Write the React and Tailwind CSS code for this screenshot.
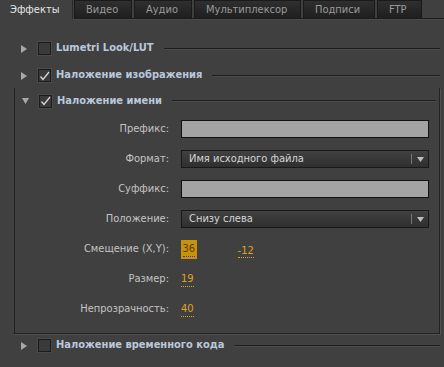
const font = { fontFamily: '"DejaVu Sans Condensed", "DejaVu Sans", Verdana, sans-serif' }

const tabs = [
  { label: 'Видео', w: 'w-[58px]' },
  { label: 'Аудио', w: 'w-[58px]' },
  { label: 'Мультиплексор', w: 'w-[107px]' },
  { label: 'Подписи', w: 'w-[72px]' },
  { label: 'FTP', w: 'w-[45px]' },
]

function Triangle({ open }) {
  return open ? (
    <svg width="7" height="6" viewBox="0 0 7 6" className="shrink-0">
      <path d="M0 0H7L3.5 6Z" fill="#a8a8a8" />
    </svg>
  ) : (
    <svg width="6" height="8" viewBox="0 0 6 8" className="shrink-0">
      <path d="M0 0L6 4L0 8Z" fill="#a8a8a8" />
    </svg>
  )
}

function Check({ on }) {
  return (
    <div className="w-[13px] h-[13px] shrink-0 border border-[#1c1c1c] bg-[#3a3a3a] shadow-[0_0_0_1px_#4a4a4a] flex items-center justify-center">
      {on && (
        <svg width="11" height="10" viewBox="0 0 11 10">
          <path d="M1.5 5.5L4 8.5L10 1" fill="none" stroke="#d8d8d8" strokeWidth="1.3" />
        </svg>
      )}
    </div>
  )
}

function Header({ title, open, on, h = 'h-[27px]' }) {
  return (
    <div className={`flex items-center ${h} pl-[21px] pr-[4px]`}>
      <div className="w-[17px] flex"><Triangle open={open} /></div>
      <Check on={on} />
      <span className="ml-[5px] text-[11px] font-bold text-[#bac8dc] whitespace-nowrap">{title}</span>
      <div className="flex-1 ml-[10px] h-[2px] border-t border-[#1e1e1e] border-b border-b-[#4c4c4c]" />
    </div>
  )
}

function Row({ label, children }) {
  return (
    <div className="flex items-center h-[30px]">
      <div className="w-[155px] text-right text-[11px] text-[#c4c4c4] whitespace-nowrap">{label}</div>
      <div className="flex-1 ml-[12px] mr-[10px] flex items-center">{children}</div>
    </div>
  )
}

function Input() {
  return <div className="w-full h-[18px] bg-[#a3a3a3] border border-[#111]" />
}

function Select({ value }) {
  return (
    <div className="w-full h-[18px] border border-[#191919] bg-gradient-to-b from-[#414141] to-[#2f2f2f] flex items-center text-[11px] text-[#d6d6d6]">
      <span className="flex-1 pl-[7px]">{value}</span>
      <div className="w-px h-[10px] bg-[#777]" />
      <div className="w-[16px] flex justify-center">
        <svg width="7" height="5" viewBox="0 0 7 5"><path d="M0 0H7L3.5 5Z" fill="#bdbdbd" /></svg>
      </div>
    </div>
  )
}

function Val({ children, hl }) {
  return hl ? (
    <span className="inline-flex items-end h-[19px] px-[1.5px] bg-[#c8920a]">
      <span className="text-[11px] leading-[14px] text-[#5a3f06] border-b border-dotted border-[#5a3f06] mb-[2px]">{children}</span>
    </span>
  ) : (
    <span className="text-[11px] leading-[14px] border-b border-dotted text-[#e0a21e] border-[#e0a21e]">
      {children}
    </span>
  )
}

export default function App() {
  return (
    <div className="w-[444px] h-[367px] bg-[#404040] overflow-hidden" style={font}>
      <div className="flex h-[19px]">
        <div className="w-[73px] h-[19px] pl-[10px] text-[11px] leading-[19px] text-[#e6e6e6] border-r border-[#2a2a2a]">Эффекты</div>
        <div className="flex gap-[2px] ml-[1px] flex-1 border-b border-[#1c1c1c] shadow-[0_1px_0_#4a4a4a]">
          {tabs.map(t => (
            <div key={t.label} className={`${t.w} h-[18px] pl-[11px] text-[11px] leading-[18px] text-[#9a9a9a] bg-gradient-to-b from-[#2f2f2f] to-[#1f1f1f] border-x border-t border-[#1a1a1a] whitespace-nowrap`}>
              {t.label}
            </div>
          ))}
        </div>
      </div>

      <div className="pt-[16px]">
        <Header title="Lumetri Look/LUT" />
        <Header title="Наложение изображения" on />
        <div className="ml-[14px] mr-[4px] mt-[12px] border-l border-r border-b border-[#222] shadow-[1px_1px_0_#505050]">
          <div className="-mt-[13px] -ml-[14px] -mr-[1px]">
            <Header title="Наложение имени" open on h="h-[26px]" />
          </div>
          <div className="-ml-px pb-[9px]">
            <Row label="Префикс:"><Input /></Row>
            <Row label="Формат:"><Select value="Имя исходного файла" /></Row>
            <Row label="Суффикс:"><Input /></Row>
            <Row label="Положение:"><Select value="Снизу слева" /></Row>
            <Row label="Смещение (X,Y):">
              <Val hl>36</Val>
              <span className="ml-[41px]"><Val>-12</Val></span>
            </Row>
            <Row label="Размер:"><Val>19</Val></Row>
            <Row label="Непрозрачность:"><Val>40</Val></Row>
          </div>
        </div>
        <Header title="Наложение временного кода" h="h-[23px]" />
      </div>
    </div>
  )
}
